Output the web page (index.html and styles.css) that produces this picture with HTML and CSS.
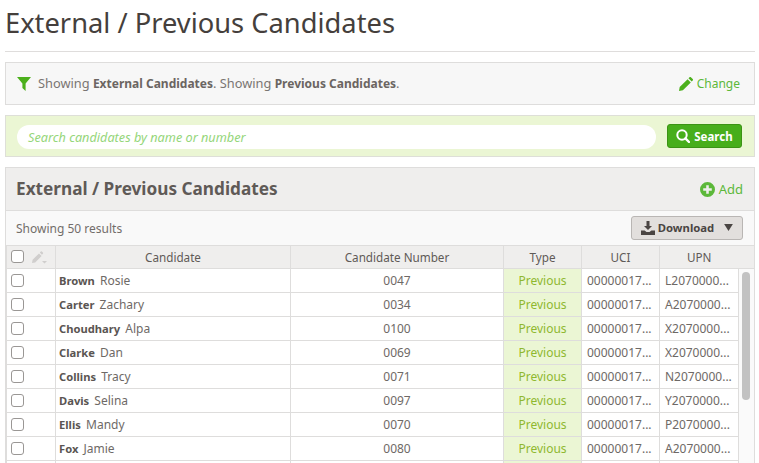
FILE: index.html
```html
<!DOCTYPE html>
<html lang="en">
<head>
<meta charset="utf-8">
<title>External / Previous Candidates</title>
<link rel="stylesheet" href="styles.css">
</head>
<body>
<main class="page">
  <h1 class="page-title">External / Previous Candidates</h1>
  <section class="filter-bar">
    <div class="filter-text">
      <svg class="icon-filter" viewBox="0 0 14 14"><path d="M0 0h14L8.6 6.4V14L5.4 11V6.4z"/></svg>
      <span>Showing <b>External Candidates</b>. Showing <b>Previous Candidates</b>.</span>
    </div>
    <a class="link">
      <svg class="icon-pencil" viewBox="0 0 14 14"><path d="M0 14l.7-3.9L8.6 2.2l3.2 3.2-7.9 7.9zM9.5 1.3l1-1a1 1 0 0 1 1.4 0l1.8 1.8a1 1 0 0 1 0 1.4l-1 1z"/></svg>
      Change
    </a>
  </section>
  <section class="search-bar">
    <div class="search-input">Search candidates by name or number</div>
    <button class="search-btn">
      <svg class="icon-search" viewBox="0 0 14 14"><circle cx="6" cy="6" r="4.7" fill="none" stroke="#fff" stroke-width="2"/><path d="M9.4 9.4L13 13" stroke="#fff" stroke-width="2.4" stroke-linecap="round"/></svg>
      Search
    </button>
  </section>
  <section class="panel">
    <header class="panel-head">
      <h2>External / Previous Candidates</h2>
      <a class="link">
        <svg class="icon-add" viewBox="0 0 14 14"><path fill-rule="evenodd" d="M7 0a7 7 0 1 1 0 14A7 7 0 0 1 7 0zM5.8 3v2.8H3v2.4h2.8V11h2.4V8.2H11V5.8H8.2V3z"/></svg>
        Add
      </a>
    </header>
    <div class="toolbar">
      <span>Showing 50 results</span>
      <button class="download-btn">
        <svg class="icon-download" viewBox="0 0 14 14"><path d="M5.5 0h3v5H11L7 9 3 5h2.5zM0 9.5h3.6L5.5 11h3l1.9-1.5H14V14H0z"/></svg>
        Download
        <svg class="icon-caret" viewBox="0 0 10 8"><path d="M0 0h10L5 8z"/></svg>
      </button>
    </div>
    <div class="table-wrap">
      <table class="grid">
        <colgroup>
          <col class="c-check"><col class="c-name"><col class="c-number"><col class="c-type"><col class="c-uci"><col class="c-upn"><col class="c-scroll">
        </colgroup>
        <thead>
          <tr>
            <th class="check-cell">
              <div class="head-tools"><span class="box"></span>
              <svg class="icon-bulk" viewBox="0 0 16 14"><path d="M1 13l.6-3.2L8 3.4l2.6 2.6L4.2 12.4zM8.8 2.6l1-1a.8.8 0 0 1 1.1 0l1 1a.8.8 0 0 1 0 1.1l-1 1zM11 11h5l-2.5 2.5z"/></svg></div>
            </th>
            <th>Candidate</th><th>Candidate Number</th><th>Type</th><th>UCI</th><th class="upn-head">UPN</th><th class="scroll-head"></th>
          </tr>
        </thead>
        <tbody>
          <tr><td class="check-cell"><span class="box"></span></td><td><b>Brown</b> Rosie</td><td class="mid">0047</td><td class="type">Previous</td><td>00000017...</td><td>L2070000...</td><td class="track" rowspan="9"><div class="thumb"></div></td></tr>
          <tr><td class="check-cell"><span class="box"></span></td><td><b>Carter</b> Zachary</td><td class="mid">0034</td><td class="type">Previous</td><td>00000017...</td><td>A2070000...</td></tr>
          <tr><td class="check-cell"><span class="box"></span></td><td><b>Choudhary</b> Alpa</td><td class="mid">0100</td><td class="type">Previous</td><td>00000017...</td><td>X2070000...</td></tr>
          <tr><td class="check-cell"><span class="box"></span></td><td><b>Clarke</b> Dan</td><td class="mid">0069</td><td class="type">Previous</td><td>00000017...</td><td>X2070000...</td></tr>
          <tr><td class="check-cell"><span class="box"></span></td><td><b>Collins</b> Tracy</td><td class="mid">0071</td><td class="type">Previous</td><td>00000017...</td><td>N2070000...</td></tr>
          <tr><td class="check-cell"><span class="box"></span></td><td><b>Davis</b> Selina</td><td class="mid">0097</td><td class="type">Previous</td><td>00000017...</td><td>Y2070000...</td></tr>
          <tr><td class="check-cell"><span class="box"></span></td><td><b>Ellis</b> Mandy</td><td class="mid">0070</td><td class="type">Previous</td><td>00000017...</td><td>P2070000...</td></tr>
          <tr><td class="check-cell"><span class="box"></span></td><td><b>Fox</b> Jamie</td><td class="mid">0080</td><td class="type">Previous</td><td>00000017...</td><td>A2070000...</td></tr>
          <tr><td class="check-cell"></td><td></td><td class="mid"></td><td class="type"></td><td></td><td></td></tr>
        </tbody>
      </table>
    </div>
  </section>
</main>
</body>
</html>
```
FILE: styles.css
```css
* { box-sizing: border-box; }
html, body { margin: 0; height: 100%; overflow: hidden; background: #fff; }
body { font-family: "Noto Sans", "Open Sans", sans-serif; color: #5f5a57; font-size: 12px; }
.page { width: 750px; margin-left: 5px; }
.page-title { margin: 0; height: 52px; padding-top: 4px; border-bottom: 1px solid #dfdddc; font-size: 27.3px; line-height: 38px; font-weight: 400; color: #453f3c; }
.filter-bar { margin-top: 10px; height: 43px; display: flex; align-items: center; justify-content: space-between; padding: 0 14px 0 11px; background: #f7f7f7; border: 1px solid #dedddc; font-size: 12.8px; color: #7a7572; }
.filter-text { display: flex; align-items: center; gap: 7px; }
.filter-text span { margin-bottom: 1px; }
.filter-text b { font-size: 12px; color: #6b6562; }
.icon-filter { width: 14px; height: 14px; fill: #4cb01c; }
.link { display: flex; align-items: center; gap: 4px; color: #5cb83a; font-size: 12px; }
.icon-pencil { width: 14px; height: 14px; fill: #4cb01c; }
.icon-add { width: 15px; height: 15px; fill: #5cb83a; }
.search-bar { margin-top: 10px; height: 42px; display: flex; align-items: center; gap: 11px; padding: 2px 11px 0; background: #ebf6d4; border: 1px solid #dedfd8; }
.search-input { width: 639px; height: 24px; flex: none; border-radius: 12px; background: #fff; padding-left: 11px; line-height: 24px; font-size: 12.7px; font-style: italic; color: #95d67a; }
.search-btn { width: 75px; height: 24px; margin-bottom: 2px; display: flex; align-items: center; justify-content: center; gap: 4px; padding: 0; background: #47ae1b; border: 1px solid #3c9315; border-radius: 3px; color: #fff; font: 700 11.5px "Noto Sans", sans-serif; }
.icon-search { width: 14px; height: 14px; }
.panel { margin-top: 10px; border: 1px solid #dedddc; border-bottom: 0; }
.panel-head { height: 43px; display: flex; align-items: center; justify-content: space-between; padding: 0 11px 0 10px; background: #efeeed; border-bottom: 1px solid #dedddc; }
.panel-head h2 { margin: 0 0 1px; font-size: 17.2px; font-weight: 700; color: #5f5a57; }
.panel-head .link { font-size: 13px; }
.toolbar { height: 34px; display: flex; align-items: center; justify-content: space-between; padding: 0 11px 0 10px; background: #f9f9f9; color: #726d6a; }
.download-btn { width: 112px; height: 24px; display: flex; align-items: center; justify-content: center; gap: 3px; padding: 0 0 1px; background: #e2dfdd; border: 1px solid #b9b6b4; border-radius: 3px; font: 700 11.3px "Noto Sans", sans-serif; color: #4a4543; }
.icon-download { width: 14px; height: 14px; fill: #4a4543; }
.icon-caret { width: 9px; height: 7px; margin-left: 7px; fill: #4a4543; }
.table-wrap { overflow: hidden; }
.grid { width: 748px; table-layout: fixed; border-collapse: collapse; }
.c-check { width: 49px; } .c-name { width: 235px; } .c-number { width: 213px; } .c-type { width: 78px; } .c-uci { width: 78px; } .c-upn { width: 79px; } .c-scroll { width: 16px; }
.grid th { height: 23px; padding: 0; background: #efeeed; border: 1px solid #dedddc; font-size: 11.7px; font-weight: 400; color: #5f5a57; }
.grid td { height: 24px; padding: 0 0 0 5px; border: 1px solid #dedddc; color: #6e6966; white-space: nowrap; overflow: hidden; }
.grid td:nth-child(2) { padding-left: 3px; }
.grid b { font-size: 11.2px; color: #5a5552; margin-right: 2px; }
.grid td.mid { text-align: center; padding: 0; }
.grid td.type { background: #ebf6d4; color: #8fb82f; text-align: center; padding: 0; }
.grid td.check-cell, .grid th.check-cell { padding: 0 0 0 4px; text-align: left; }
.grid td.track { padding: 3px 0 0 3px; vertical-align: top; border: 0; background: #fafafa; }
.grid th.upn-head { border-right: 0; }
.grid th.scroll-head { border-left: 0; border-right: 0; }
.thumb { width: 8px; height: 128px; border-radius: 4px; background: #c2c2c2; }
.head-tools { display: flex; align-items: center; gap: 7px; }
.box { display: block; flex: none; width: 13px; height: 13px; margin-bottom: 1px; background: #fff; border: 1px solid #9a9795; border-radius: 3px; }
.icon-bulk { width: 16px; height: 14px; fill: #d0cecd; }
```
